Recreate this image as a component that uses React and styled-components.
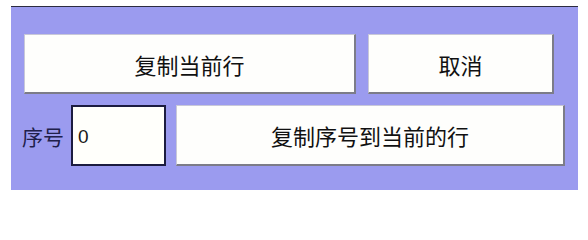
import React, { useState } from 'react';
import styled, { createGlobalStyle } from 'styled-components';

const GlobalStyle = createGlobalStyle`
  body {
    margin: 0;
    background: #ffffff;
    font-family: "Noto Sans CJK SC", "Noto Sans", sans-serif;
  }
`;

const Panel = styled.div`
  box-sizing: border-box;
  margin: 6px 0 0 11px;
  width: 567px;
  height: 184px;
  padding-top: 27px;
  background: #9b9bef;
  border-top: 1px solid #2c2c40;
`;

const Row = styled.div`
  display: flex;
  align-items: center;
  gap: ${props => props.$gap}px;
  padding-left: ${props => props.$indent}px;
  margin-top: ${props => props.$top || 0}px;
`;

const Button = styled.button`
  box-sizing: border-box;
  width: ${props => props.$width}px;
  height: ${props => props.$height}px;
  padding: 0;
  background: #fefefc;
  border: 1px solid #c8c8d8;
  border-right: 2px solid #7c7c88;
  border-bottom: 2px solid #7c7c88;
  font-family: "Noto Sans CJK SC", sans-serif;
  font-size: 22px;
  color: #111111;
  cursor: pointer;

  &:active {
    background: #f0f0ea;
  }
`;

const Label = styled.span`
  font-family: "Noto Sans CJK SC", sans-serif;
  font-size: 21px;
  color: #20204a;
  margin-right: 7px;
`;

const NumberInput = styled.input`
  box-sizing: border-box;
  width: 95px;
  height: 61px;
  padding: 2px 0 0 5px;
  margin-right: 10px;
  background: #fffffb;
  border: 2px solid #1c1c40;
  font-family: "Liberation Sans", sans-serif;
  font-size: 19px;
  color: #1a1a1a;
  outline: none;
`;

export default function App() {
  const [index, setIndex] = useState('0');

  return (
    <>
      <GlobalStyle />
      <Panel>
        <Row $indent={13} $gap={12}>
          <Button $width={332} $height={60}>复制当前行</Button>
          <Button $width={186} $height={60}>取消</Button>
        </Row>
        <Row $indent={11} $gap={0} $top={11}>
          <Label>序号</Label>
          <NumberInput value={index} onChange={e => setIndex(e.target.value)} />
          <Button $width={389} $height={61}>复制序号到当前的行</Button>
        </Row>
      </Panel>
    </>
  );
}
